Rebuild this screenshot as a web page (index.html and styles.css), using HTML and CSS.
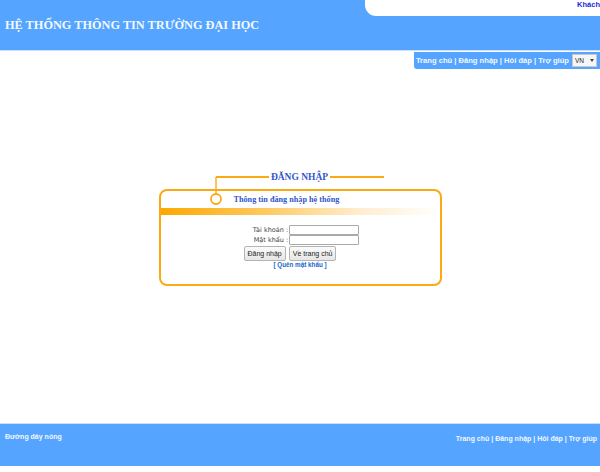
FILE: index.html
```html
<!DOCTYPE html>
<html lang="vi">
<head>
<meta charset="utf-8">
<title>Hệ thống thông tin trường đại học</title>
<link rel="stylesheet" href="styles.css">
</head>
<body>
<div class="page">
  <header class="header">
    <h1 class="site-title">HỆ THỐNG THÔNG TIN TRƯỜNG ĐẠI HỌC</h1>
    <div class="user-tab"><span class="user-name">Khách</span></div>
  </header>
  <div class="nav-row">
    <nav class="top-nav">
      <span class="nav-links">Trang chủ | Đăng nhập | Hỏi đáp | Trợ giúp</span>
      <span class="lang-select"><span class="lang-text">VN</span><span class="lang-arrow"></span></span>
    </nav>
  </div>
  <main class="main">
    <section class="login">
      <div class="login-heading">
        <span class="heading-line line-left"></span>
        <span class="heading-text">ĐĂNG NHẬP</span>
        <span class="heading-line line-right"></span>
      </div>
      <div class="login-box">
        <div class="box-title">Thông tin đăng nhập hệ thống</div>
        <div class="box-bar"></div>
        <form class="login-form">
          <div class="form-grid">
            <label class="form-label">Tài khoản :</label>
            <span class="form-input"></span>
            <label class="form-label">Mật khẩu :</label>
            <span class="form-input"></span>
          </div>
          <div class="form-buttons">
            <span class="btn">Đăng nhập</span>
            <span class="btn">Về trang chủ</span>
          </div>
          <div class="forgot">[ Quên mật khẩu ]</div>
        </form>
      </div>
      <svg class="connector" width="14" height="30" viewBox="0 0 14 30">
        <line x1="7" y1="0" x2="7" y2="17" stroke="#fbaa14" stroke-width="1.4"/>
        <circle cx="7" cy="22" r="5" fill="#fff" stroke="#fbaa14" stroke-width="1.8"/>
      </svg>
    </section>
  </main>
  <footer class="footer">
    <span class="hotline">Đường dây nóng</span>
    <span class="footer-links">Trang chủ | Đăng nhập | Hỏi đáp | Trợ giúp</span>
  </footer>
</div>
</body>
</html>
```
FILE: styles.css
```css
html, body {
  margin: 0;
  padding: 0;
  background: #fff;
}
.page {
  width: 600px;
  height: 472px;
  display: flex;
  flex-direction: column;
  font-family: "Liberation Sans", Arial, sans-serif;
}
.header {
  position: relative;
  height: 50px;
  background: #55a4ff;
  border-bottom: 1px solid #c6e0ff;
  display: flex;
  align-items: center;
  flex-shrink: 0;
}
.site-title {
  margin: 0 0 0 5px;
  font-family: "Liberation Serif", "Times New Roman", serif;
  font-weight: bold;
  font-size: 12.3px;
  color: #f4f8ff;
}
.user-tab {
  position: absolute;
  top: 0;
  right: 0;
  width: 235px;
  height: 16px;
  background: #fff;
  border-bottom-left-radius: 11px;
  text-align: right;
  font-size: 7.5px;
  line-height: 10px;
}
.user-name {
  font-weight: bold;
  color: #1a2be0;
}
.nav-row {
  display: flex;
  justify-content: flex-end;
  padding-top: 1px;
  flex-shrink: 0;
}
.top-nav {
  display: flex;
  align-items: center;
  gap: 3px;
  height: 17px;
  padding: 0 3px 0 2px;
  background: #55a4ff;
  border-bottom-left-radius: 3px;
}
.nav-links {
  font-size: 7.6px;
  font-weight: bold;
  color: #f2f7ff;
  white-space: nowrap;
}
.lang-select {
  display: flex;
  align-items: center;
  justify-content: space-between;
  padding: 0 2px;
  background: #f6f6f6;
  border: 1px solid #c8c8c8;
  box-sizing: border-box;
  width: 25px;
  height: 13px;
}
.lang-text {
  font-size: 6.5px;
  color: #222;
}
.lang-arrow {
  width: 0;
  height: 0;
  border-left: 2.5px solid transparent;
  border-right: 2.5px solid transparent;
  border-top: 3px solid #444;
}
.main {
  flex: 1;
  display: flex;
  justify-content: center;
  padding-top: 101px;
}
.login {
  position: relative;
  width: 283px;
}
.login-heading {
  display: flex;
  align-items: center;
  height: 14px;
  padding-left: 57px;
  padding-right: 58px;
  gap: 2px;
}
.heading-line {
  flex: 1;
  height: 1.3px;
  background: #fbaa14;
}
.heading-text {
  font-family: "Liberation Serif", "Times New Roman", serif;
  font-weight: bold;
  font-size: 9.5px;
  color: #3355cc;
}
.login-box {
  margin-top: 5px;
  height: 93px;
  border: 2px solid #fbaa14;
  border-radius: 8px;
  display: flex;
  flex-direction: column;
}
.box-title {
  height: 17px;
  display: flex;
  align-items: center;
  padding-left: 73px;
  font-family: "Liberation Serif", "Times New Roman", serif;
  font-weight: bold;
  font-size: 8.2px;
  color: #3355cc;
}
.box-bar {
  height: 7px;
  background: linear-gradient(to right, #fca800 0%, #fdc75a 35%, #ffeccc 70%, #ffffff 100%);
}
.login-form {
  display: flex;
  flex-direction: column;
  align-items: center;
  padding-top: 10px;
  margin: 0;
}
.form-grid {
  display: grid;
  grid-template-columns: auto 70px;
  column-gap: 1px;
  align-items: center;
  margin-left: 12px;
}
.form-label {
  font-family: "DejaVu Sans", Verdana, sans-serif;
  font-size: 6.5px;
  color: #444;
  text-align: right;
}
.form-input {
  height: 8px;
  border: 1px solid #a9a9a9;
  border-radius: 1px;
  background: #fff;
}
.form-buttons {
  display: flex;
  gap: 3px;
  margin-top: 1px;
  margin-left: -20px;
}
.btn {
  display: flex;
  align-items: center;
  height: 13px;
  padding: 0 3px;
  border: 1px solid #b4b4b4;
  border-radius: 2px;
  background: linear-gradient(#fbfbfb, #e6e6e6);
  font-size: 7px;
  color: #222;
}
.forgot {
  margin-top: 0;
  font-size: 6.3px;
  font-weight: bold;
  color: #1a66cc;
}
.connector {
  position: absolute;
  left: 50px;
  top: 7px;
}
.footer {
  height: 43px;
  margin-bottom: 6px;
  flex-shrink: 0;
  background: #55a4ff;
  border-top: 1px solid #c6e0ff;
  display: flex;
  align-items: flex-start;
  justify-content: space-between;
  padding: 9px 3px 0 5px;
  box-sizing: border-box;
}
.hotline {
  font-size: 7px;
  font-weight: bold;
  color: #f2f7ff;
}
.footer-links {
  margin-top: 2px;
  font-size: 7px;
  font-weight: bold;
  color: #f2f7ff;
  white-space: nowrap;
}
```
